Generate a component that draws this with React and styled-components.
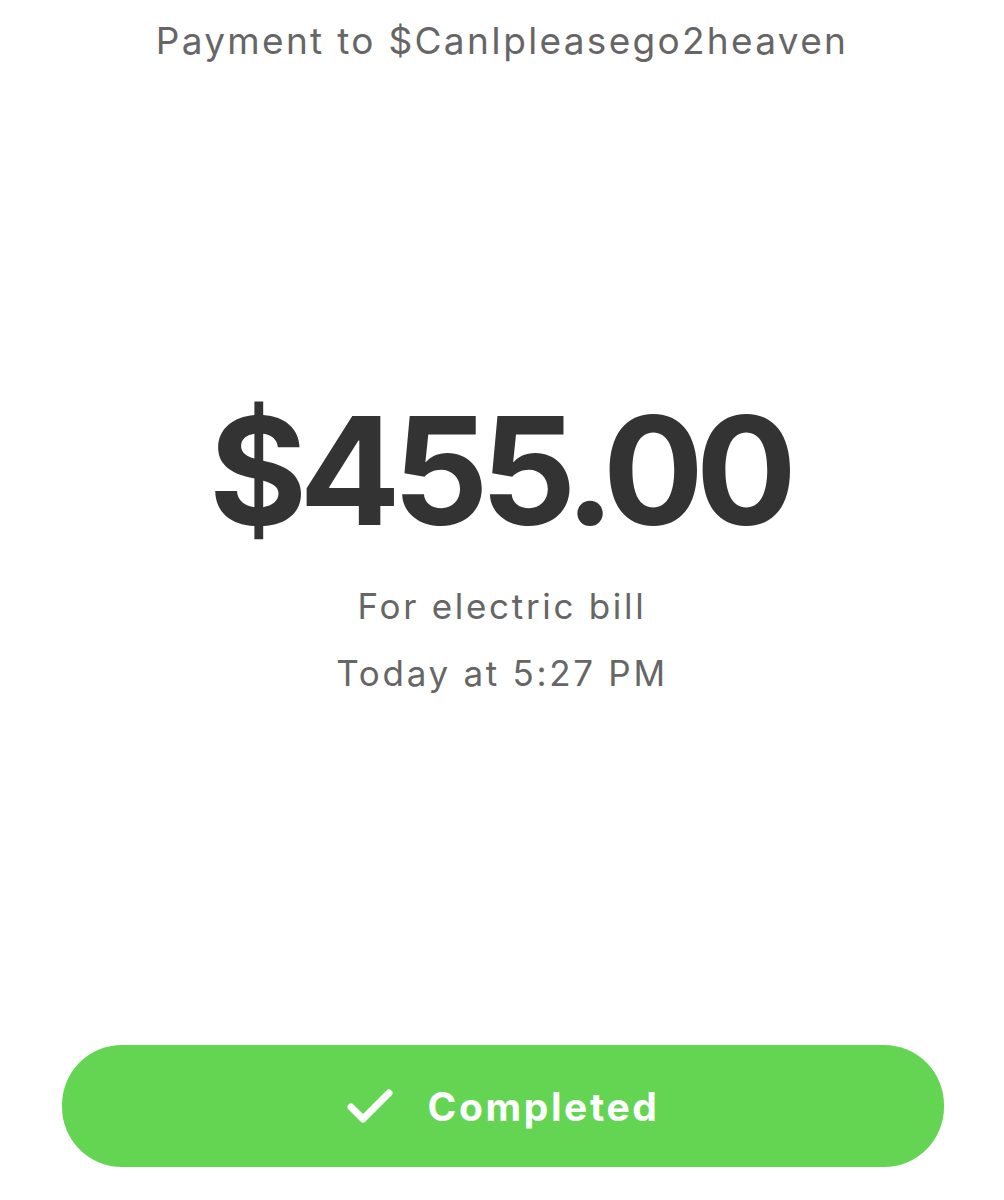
import React from "react";
import styled, { createGlobalStyle } from "styled-components";

const Global = createGlobalStyle`
  html, body { margin: 0; padding: 0; background: #ffffff; }
  body { font-family: Inter, "Open Sans", "Liberation Sans", sans-serif; }
`;

const Screen = styled.div`
  width: 1004px;
  height: 1200px;
  display: flex;
  flex-direction: column;
  align-items: center;
  box-sizing: border-box;
`;

const Header = styled.div`
  margin-top: 17px;
  font-size: 37px;
  line-height: 48px;
  color: #666666;
  letter-spacing: 2.3px;
`;

const Details = styled.div`
  margin-top: 321px;
  display: flex;
  flex-direction: column;
  align-items: center;
`;

const Amount = styled.div`
  font-size: 150px;
  font-weight: 700;
  line-height: 170px;
  color: #333333;
  letter-spacing: -8px;
  margin-right: 6px;
`;

const NoteGroup = styled.div`
  margin-top: 17px;
  display: flex;
  flex-direction: column;
  align-items: center;
`;

const Note = styled.div`
  font-size: 35px;
  line-height: 67px;
  color: #666666;
  letter-spacing: 2.7px;
`;

const Spacer = styled.div`
  flex: 1;
`;

const CompletedButton = styled.div`
  width: 882px;
  height: 122px;
  margin-bottom: 33px;
  margin-left: 2px;
  border-radius: 60px;
  background: #63d553;
  display: flex;
  align-items: center;
  justify-content: center;
  gap: 35px;
  color: #ffffff;
  font-size: 39px;
  font-weight: 700;
  letter-spacing: 2.6px;
`;

const Check = () => (
  <svg width="46" height="34" viewBox="0 0 46 34" fill="none">
    <path d="M4 18 L16 30 L42 4" stroke="#ffffff" strokeWidth="7" strokeLinecap="round" strokeLinejoin="round" />
  </svg>
);

export default function App() {
  return (
    <>
      <Global />
      <Screen>
        <Header>Payment to $CanIpleasego2heaven</Header>
        <Details>
          <Amount>$455.00</Amount>
          <NoteGroup>
            <Note>For electric bill</Note>
            <Note>Today at 5:27 PM</Note>
          </NoteGroup>
        </Details>
        <Spacer />
        <CompletedButton>
          <Check />
          <span>Completed</span>
        </CompletedButton>
      </Screen>
    </>
  );
}
